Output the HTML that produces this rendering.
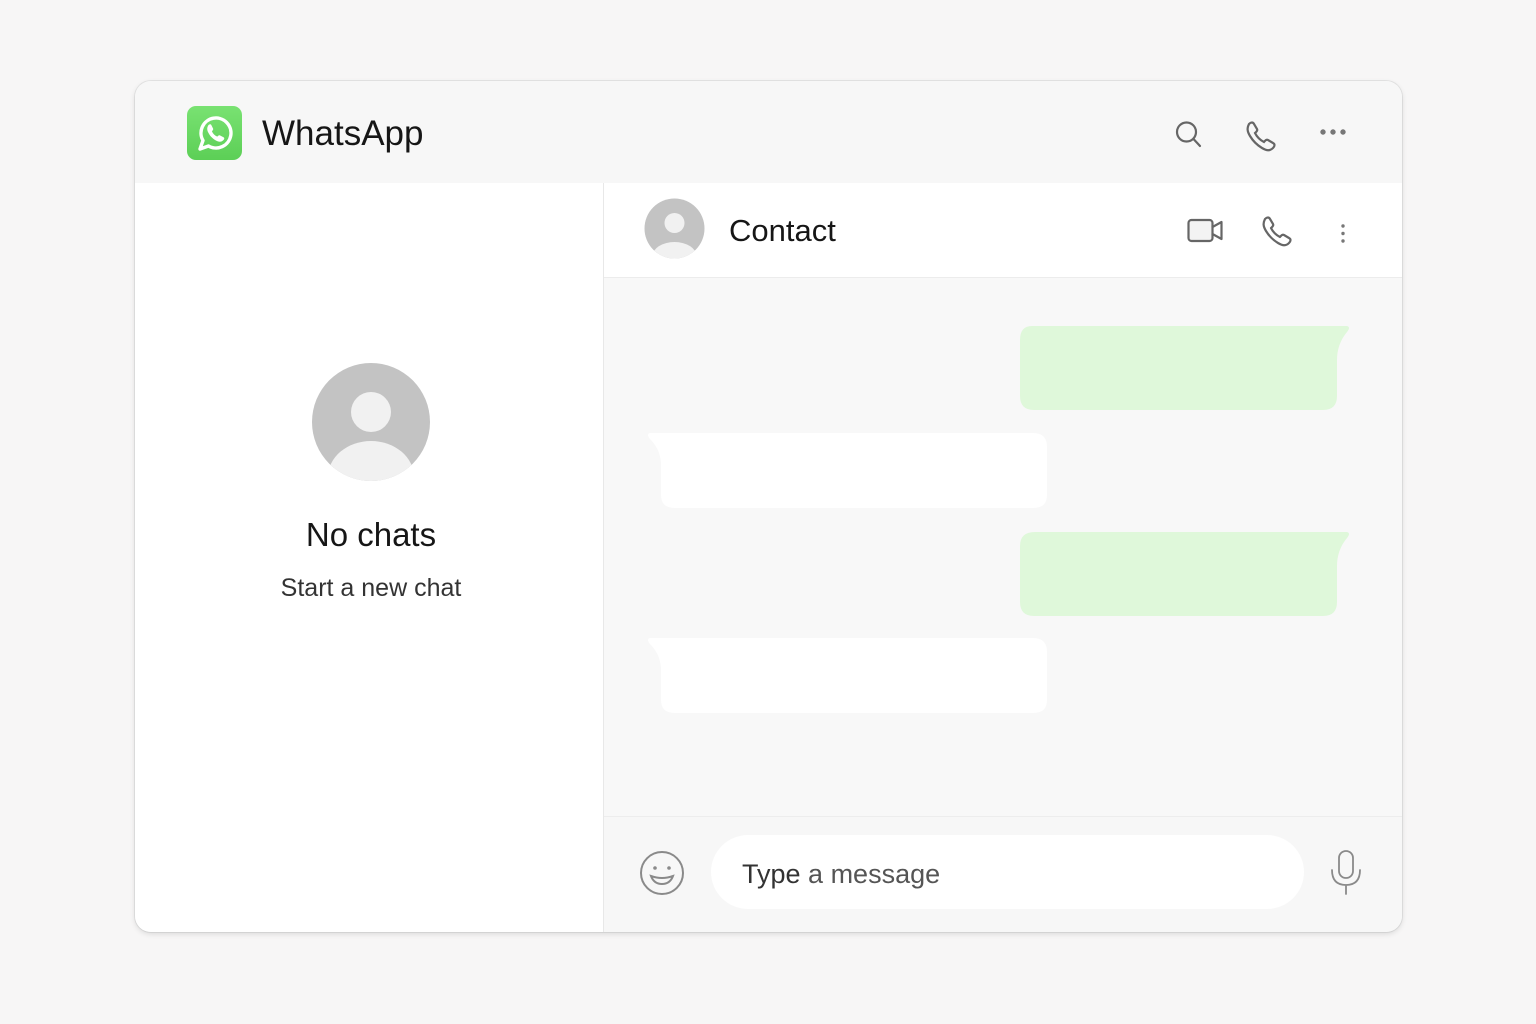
<!DOCTYPE html>
<html><head><meta charset="utf-8"><style>
body{margin:0;width:1536px;height:1024px;background:#f7f6f6;font-family:"Liberation Sans",sans-serif;position:relative;overflow:hidden}
.a{position:absolute}
.card{left:135px;top:81px;width:1267px;height:851px;border-radius:16px;background:#f7f7f7;box-shadow:0 2px 6px rgba(0,0,0,.12),0 0 0 1px #e6e6e6;overflow:hidden}
</style></head><body>
<div class="a card">
 <div class="a" style="left:0;top:0;width:1267px;height:102px;background:#f7f7f7;border-bottom:1px solid #ececec"></div>
 <div class="a" style="left:0;top:102px;width:468px;height:749px;background:#fff;border-right:1px solid #e8e8e8"></div>
 <div class="a" style="left:469px;top:102px;width:798px;height:94px;background:#fff;border-bottom:1px solid #ececec"></div>
 <div class="a" style="left:469px;top:197px;width:798px;height:538px;background:#f8f8f8"></div>
 <div class="a" style="left:469px;top:735px;width:798px;height:116px;background:#f7f7f7;border-top:1px solid #ededed"></div>
</div>
<!-- logo -->
<div class="a" style="left:187px;top:106px;width:55px;height:54px;border-radius:9px;background:linear-gradient(#79e272,#5ccf56)"></div>
<svg class="a" style="left:187px;top:106px" width="55" height="54" viewBox="0 0 55 54"><path d="M13 43 L16 34.5 A15 15 0 1 1 21.5 40 Z" fill="none" stroke="#fff" stroke-width="3.4" stroke-linejoin="round"/><path d="M21.5 19c1-1 2.3-1 2.8 0l1.8 3.6c.4 1-.6 2-1.2 2.6 1 2.4 3 4.4 5.4 5.4.6-.6 1.6-1.6 2.6-1.2l3.6 1.8c1 .5 1 1.8 0 2.8-2 2-4 2.3-6.8.9-4-2-6.6-4.6-8.6-8.6-1.4-2.8-1-5.2.4-7.3z" fill="#fff"/></svg>
<div class="a" style="left:262px;top:114px;font-size:35px;color:#161616">WhatsApp</div>
<!-- top icons -->
<svg class="a" style="left:1170px;top:115px" width="200" height="40" fill="none" stroke="#666" stroke-width="2.2" stroke-linecap="round">
 <circle cx="16.5" cy="17" r="9.5"/><line x1="23.5" y1="24" x2="30" y2="31"/>
 <path d="M79 9c2-2 4-2 5 0l3 5c1 2-1 3-2 4 2 4 5 7 9 9 1-1 2-3 4-2l5 3c2 1 2 3 0 5-3 3-6 3-11 0-5-3-9-7-12-12-3-5-3-8-1-12z"/>
 <circle cx="153" cy="17" r="1.6" fill="#777" stroke="#777"/><circle cx="163" cy="17" r="1.6" fill="#777" stroke="#777"/><circle cx="173" cy="17" r="1.6" fill="#777" stroke="#777"/>
</svg>
<!-- contact avatar -->
<svg class="a" style="left:644px;top:198px" width="61" height="61"><defs><clipPath id="c1"><circle cx="30.5" cy="30.5" r="30"/></clipPath></defs><circle cx="30.5" cy="30.5" r="30" fill="#c3c3c3"/><g clip-path="url(#c1)"><circle cx="30.5" cy="25" r="10" fill="#f1f1f1"/><ellipse cx="30.5" cy="58" rx="22" ry="14" fill="#f1f1f1"/></g></svg>
<div class="a" style="left:729px;top:213px;font-size:31px;color:#161616">Contact</div>
<svg class="a" style="left:1180px;top:210px" width="180" height="45" fill="none" stroke="#666" stroke-width="2.2" stroke-linecap="round" stroke-linejoin="round">
 <rect x="8.5" y="10" width="24" height="21" rx="3" fill="#f3f3f3"/><path d="M32.5 17l9-5v17l-9-5"/>
 <path d="M85 9c2-2 4-2 5 0l3 5c1 2-1 3-2 4 2 4 5 7 9 9 1-1 2-3 4-2l5 3c2 1 2 3 0 5-3 3-6 3-11 0-5-3-9-7-12-12-3-5-3-8-1-12z"/>
 <circle cx="163" cy="16" r="1.7" fill="#777" stroke="none"/><circle cx="163" cy="23.5" r="1.7" fill="#777" stroke="none"/><circle cx="163" cy="31" r="1.7" fill="#777" stroke="none"/>
</svg>
<!-- bubbles -->
<svg class="a" style="left:640px;top:320px" width="720" height="400">
 <path d="M392 6 H707 Q711 7 707 12 Q697 24 697 40 V76 Q697 90 683 90 H394 Q380 90 380 76 V20 Q380 6 392 6Z" fill="#dff8da"/>
 <path d="M395 212 H707 Q711 213 707 218 Q697 230 697 246 V282 Q697 296 683 296 H394 Q380 296 380 282 V226 Q380 212 395 212Z" fill="#dff8da"/>
 <path d="M10 113 H393 Q407 113 407 127 V175 Q407 188 393 188 H35 Q21 188 21 175 V145 Q21 130 10 119 Q6 114 10 113Z" fill="#fff"/>
 <path d="M10 318 H393 Q407 318 407 332 V380 Q407 393 393 393 H35 Q21 393 21 380 V350 Q21 335 10 324 Q6 319 10 318Z" fill="#fff"/>
</svg>
<!-- left empty state -->
<svg class="a" style="left:311px;top:362px" width="120" height="120"><defs><clipPath id="c2"><circle cx="60" cy="60" r="59"/></clipPath></defs><circle cx="60" cy="60" r="59" fill="#c3c3c3"/><g clip-path="url(#c2)"><circle cx="60" cy="50" r="20" fill="#f1f1f1"/><ellipse cx="60" cy="115" rx="43" ry="36" fill="#f1f1f1"/></g></svg>
<div class="a" style="left:135px;width:472px;top:516px;text-align:center;font-size:33px;color:#161616">No chats</div>
<div class="a" style="left:135px;width:472px;top:574px;text-align:center;font-size:25px;color:#333">Start a new chat</div>
<!-- input -->
<svg class="a" style="left:638px;top:849px" width="48" height="48" fill="none" stroke="#8a8a8a" stroke-width="2"><circle cx="24" cy="24" r="21"/><circle cx="17" cy="19" r="1.8" fill="#8a8a8a" stroke="none"/><circle cx="31" cy="19" r="1.8" fill="#8a8a8a" stroke="none"/><path d="M13 27 Q24 31 35 27 Q32 35 24 35 Q16 35 13 27Z"/></svg>
<div class="a" style="left:711px;top:835px;width:593px;height:74px;border-radius:37px;background:#fff"></div>
<div class="a" style="left:742px;top:859px;font-size:27px;color:#555"><span style="color:#333">Type</span> a message</div>
<svg class="a" style="left:1328px;top:848px" width="36" height="48" fill="none" stroke="#8a8a8a" stroke-width="1.8" stroke-linecap="round"><rect x="11" y="3" width="14" height="27" rx="7"/><path d="M4 22 Q4 37 18 37 Q32 37 32 22 M18 37 V46"/></svg>
</body></html>
